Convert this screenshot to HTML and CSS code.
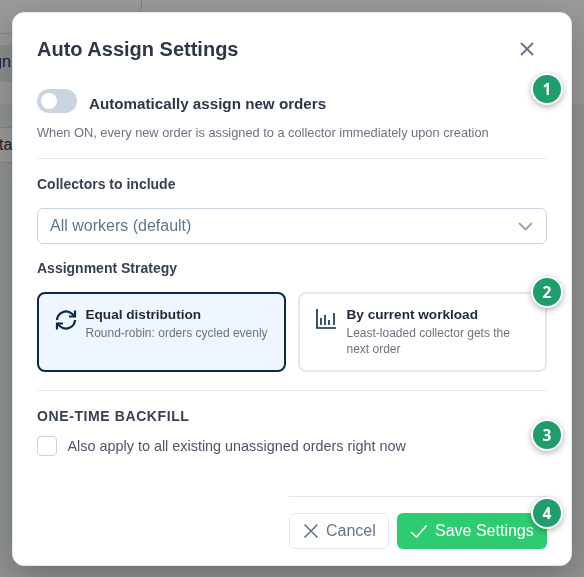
FILE: index.html
```html
<!DOCTYPE html>
<html lang="en">
<head>
    <meta charset="UTF-8">
    <meta name="viewport" content="width=device-width, initial-scale=1.0">
    <title>Auto Assign Settings</title>
    <link rel="stylesheet" href="styles.css">
</head>
<body>
    <!-- page behind the overlay -->
    <div class="page">
        <div class="page-head">
            <div class="page-tab"></div>
            <div class="page-strip">
                <div class="page-btn">gn</div>
            </div>
        </div>
        <div class="page-body">
            <div class="page-cell">ta</div>
        </div>
    </div>

    <div class="overlay"></div>

    <div class="modal">
        <div class="modal-header">
            <h2>Auto Assign Settings</h2>
            <button class="close-btn" type="button" aria-label="Close">
                <svg width="20" height="20" viewBox="0 0 20 20"><path d="M4 4l12 12M16 4L4 16"/></svg>
            </button>
        </div>

        <div class="toggle-row">
            <span class="toggle"><span class="toggle-knob"></span></span>
            <span class="toggle-label">Automatically assign new orders</span>
        </div>
        <p class="hint">When ON, every new order is assigned to a collector immediately upon creation</p>

        <hr class="divider">

        <div class="field-label label-collectors">Collectors to include</div>
        <div class="select-box">
            <span>All workers (default)</span>
            <svg width="16" height="10" viewBox="0 0 16 10"><path d="M1 2l6.5 6.5L14 2"/></svg>
        </div>

        <div class="field-label label-strategy">Assignment Strategy</div>
        <div class="strategy-grid">
            <div class="strategy-card active">
                <svg class="icon-refresh" width="24" height="24" viewBox="0 0 24 24">
                    <path d="M21 2.5v6h-6"/>
                    <path d="M3 12a9 9 0 0 1 15-6.2L21 8.5"/>
                    <path d="M3 21.5v-6h6"/>
                    <path d="M21 12a9 9 0 0 1-15 6.2L3 15.5"/>
                </svg>
                <div>
                    <div class="strategy-title">Equal distribution</div>
                    <div class="strategy-desc">Round-robin: orders cycled evenly</div>
                </div>
            </div>
            <div class="strategy-card">
                <svg class="icon-bars" width="22" height="22" viewBox="0 0 22 22">
                    <path d="M1 1v19h19"/>
                    <path d="M5 10v7M9 7v10M13 12v5M18 5v12"/>
                </svg>
                <div>
                    <div class="strategy-title">By current workload</div>
                    <div class="strategy-desc">Least-loaded collector gets the next order</div>
                </div>
            </div>
        </div>

        <hr class="divider divider-backfill">

        <div class="section-title">ONE-TIME BACKFILL</div>
        <label class="check-row">
            <span class="checkbox"></span>
            <span>Also apply to all existing unassigned orders right now</span>
        </label>

        <div class="modal-footer">
            <button class="btn btn-cancel" type="button">
                <svg width="18" height="18" viewBox="0 0 18 18"><path d="M2.5 2.5l13 13M15.5 2.5l-13 13"/></svg>
                Cancel
            </button>
            <button class="btn btn-save" type="button">
                <svg width="18" height="18" viewBox="0 0 18 18"><path d="M1 10l5.5 5L16.5 3.5"/></svg>
                Save Settings
            </button>
        </div>

        <span class="step step-1">1</span>
        <span class="step step-2">2</span>
        <span class="step step-3">3</span>
        <span class="step step-4">4</span>
    </div>
</body>
</html>
```

FILE: styles.css
```css
* {
    margin: 0;
    padding: 0;
    box-sizing: border-box;
}

html, body {
    height: 100%;
    overflow: hidden;
}

body {
    font-family: 'Liberation Sans', Arial, sans-serif;
    background-color: #f0f5f3;
    color: #2d3748;
}

/* page behind the overlay */
.page {
    height: 577px;
    overflow: hidden;
    font-size: 16px;
    color: #2d3748;
}

.page-head {
    height: 104px;
    background-color: #fff;
}

.page-tab {
    width: 142px;
    height: 12px;
    border-right: 1px solid #ccc;
    border-bottom-right-radius: 6px;
}

.page-strip {
    width: 100px;
    height: 92px;
    padding-top: 33px;
    position: relative;
}

.page-strip::before {
    content: "";
    display: block;
    height: 1px;
    margin-top: -12px;
    margin-bottom: 11px;
    background-color: #ddd;
}

.page-btn {
    height: 37px;
    background-color: #ebebeb;
    line-height: 34px;
    text-indent: -7px;
}

.page-body {
    padding-top: 23px;
}

.page-cell {
    width: 100px;
    height: 36px;
    border-top: 1px solid #ddd;
    border-bottom: 1px solid #ddd;
    background-color: #fff;
    line-height: 34px;
    text-indent: -1px;
}

.overlay {
    position: fixed;
    inset: 0;
    background: rgba(0, 0, 0, 0.4);
}

.modal {
    position: fixed;
    left: 12px;
    top: 12px;
    width: 560px;
    height: 554px;
    padding: 0 24px;
    background: #fff;
    border: 1px solid #e2e8f0;
    border-radius: 12px;
    box-shadow: 0 10px 30px rgba(0, 0, 0, 0.25);
}

.modal-header {
    height: 72px;
    display: flex;
    justify-content: space-between;
    align-items: center;
}

.modal-header h2 {
    font-size: 20px;
    font-weight: 700;
    color: #2d3748;
}

.close-btn {
    width: 20px;
    height: 20px;
    margin-right: 10px;
    border: none;
    background: none;
}

.close-btn svg {
    display: block;
    fill: none;
    stroke: #64748b;
    stroke-width: 1.8;
}

.toggle-row {
    display: flex;
    align-items: center;
    gap: 12px;
    margin-top: 4px;
    height: 24px;
}

.toggle {
    width: 40px;
    height: 24px;
    padding: 4px;
    background: #cbd5e1;
    border-radius: 12px;
}

.toggle-knob {
    display: block;
    width: 16px;
    height: 16px;
    background: #fff;
    border-radius: 50%;
}

.toggle-label {
    margin-top: 4px;
    font-size: 15.2px;
    font-weight: 700;
    color: #2d3748;
}

.hint {
    margin-top: 11px;
    font-size: 12.8px;
    line-height: 18px;
    color: #6b7280;
}

.divider {
    border: none;
    border-top: 1px solid #e2e8f0;
    margin-top: 16px;
}

.field-label {
    font-size: 14px;
    font-weight: 700;
    color: #374151;
    line-height: 18px;
}

.label-collectors {
    margin-top: 16px;
}

.select-box {
    margin-top: 15px;
    height: 36px;
    padding: 0 12px;
    display: flex;
    justify-content: space-between;
    align-items: center;
    border: 1px solid #cbd5e1;
    border-radius: 6px;
    font-size: 16px;
    color: #64748b;
}

.select-box svg {
    fill: none;
    stroke: #94a3b8;
    stroke-width: 1.8;
}

.label-strategy {
    margin-top: 15px;
}

.strategy-grid {
    margin-top: 15px;
    display: grid;
    grid-template-columns: 1fr 1fr;
    gap: 12px;
}

.strategy-card {
    height: 80px;
    padding: 12px 14px 12px 15px;
    display: flex;
    border: 2px solid #e5e7eb;
    border-radius: 8px;
    background: #fff;
}

.strategy-card.active {
    border-color: #0b2a4a;
    background: #eff6ff;
}

.icon-refresh,
.icon-bars {
    flex: none;
    fill: none;
    stroke: #0b2a4a;
    margin-top: 2px;
}

.icon-refresh {
    stroke-width: 2.2;
    margin-left: -0.5px;
    margin-right: 8px;
}

.icon-bars {
    stroke-width: 1.6;
    margin-left: 1px;
    margin-right: 8.5px;
}

.strategy-title {
    font-size: 13.6px;
    font-weight: 700;
    color: #1f2937;
    line-height: 18px;
}

.strategy-desc {
    margin-top: 1px;
    font-size: 12px;
    line-height: 16px;
    color: #6b7280;
}

.divider-backfill {
    margin-top: 18px;
}

.section-title {
    margin-top: 16px;
    font-size: 14px;
    font-weight: 700;
    line-height: 18px;
    letter-spacing: 0.6px;
    color: #374151;
}

.check-row {
    margin-top: 11px;
    display: flex;
    align-items: center;
    gap: 10.5px;
    font-size: 14.4px;
    color: #4a5568;
}

.checkbox {
    width: 20px;
    height: 20px;
    border: 1px solid #cbd5e1;
    border-radius: 4px;
}

.modal-footer {
    position: absolute;
    right: 24px;
    bottom: 16px;
    width: 258px;
    padding-top: 16px;
    border-top: 1px solid #e5e7eb;
    display: flex;
    justify-content: space-between;
}

.btn {
    height: 36px;
    display: flex;
    align-items: center;
    border-radius: 6px;
    font-size: 16px;
    font-family: inherit;
}

.btn svg {
    fill: none;
    stroke-width: 1.6;
}

.btn-cancel {
    width: 100px;
    padding-left: 12px;
    gap: 6px;
    border: 1px solid #e2e8f0;
    background: #fff;
    color: #64748b;
}

.btn-cancel svg {
    stroke: #64748b;
}

.btn-save {
    width: 150px;
    padding-left: 13px;
    gap: 7px;
    border: none;
    background: #2ecc71;
    color: #fff;
}

.btn-save svg {
    stroke: #fff;
}

.step {
    position: absolute;
    width: 32px;
    height: 32px;
    display: flex;
    align-items: center;
    justify-content: center;
    background: #1f9d6b;
    border: 2px solid #fff;
    border-radius: 50%;
    box-shadow: 0 2px 6px rgba(0, 0, 0, 0.3);
    color: #fff;
    font-family: 'Noto Sans', sans-serif;
    font-size: 15.5px;
    font-weight: 700;
}

.step-1 { left: 518px; top: 60px; }
.step-2 { left: 518px; top: 263px; }
.step-3 { left: 518px; top: 406px; }
.step-4 { left: 518px; top: 484px; }
```
